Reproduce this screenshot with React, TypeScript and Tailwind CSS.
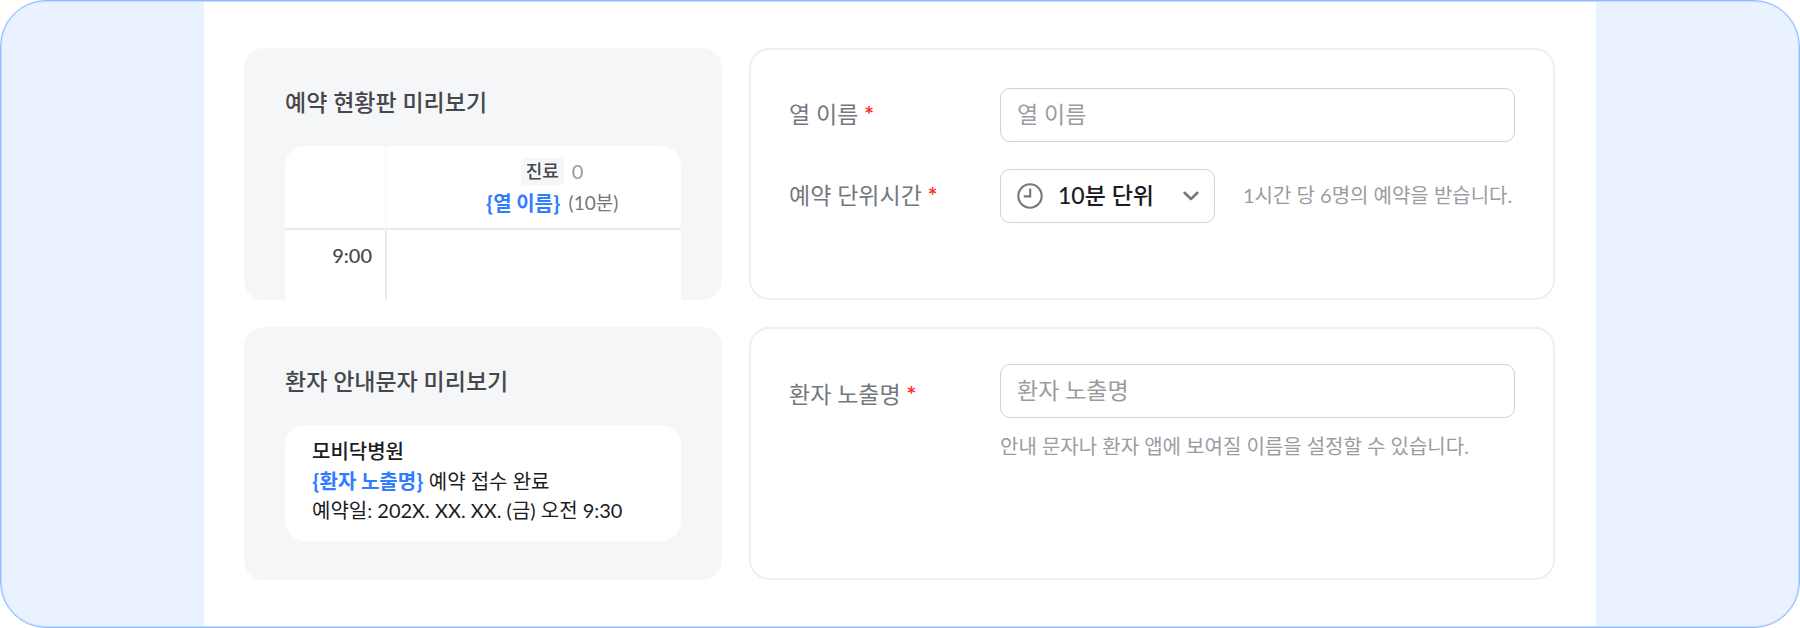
import type { ReactNode } from 'react'

function Clock() {
  return (
    <svg viewBox="0 0 26 26" fill="none" stroke="#74777e" strokeWidth="2.1" className="h-[26px] w-[26px]">
      <circle cx="13" cy="13" r="11.7" />
      <path d="M13.2 5.5v7.9H6.8" />
    </svg>
  )
}

function Chevron() {
  return (
    <svg viewBox="0 0 16 10" fill="none" stroke="#74777e" strokeWidth="2.6" strokeLinecap="round" strokeLinejoin="round" className="h-[10px] w-4">
      <path d="M1.6 1.8 8 8l6.4-6.2" />
    </svg>
  )
}

function PreviewCard({ title, children }: { title: string; children: ReactNode }) {
  return (
    <section className="flex flex-col overflow-hidden rounded-[20px] bg-[#f5f6f8] px-[41px] pt-9">
      <h2 className="text-[23px] leading-9 font-medium text-[#46474c]">{title}</h2>
      {children}
    </section>
  )
}

function Token({ children }: { children: ReactNode }) {
  return <strong className="font-['Noto_Sans_CJK_KR',sans-serif] text-[20px] font-bold text-[#327dff]">{children}</strong>
}

function FieldLabel({ htmlFor, children }: { htmlFor: string; children: ReactNode }) {
  return (
    <label htmlFor={htmlFor} className="w-[211px] shrink-0 text-[23px] leading-[52px] text-[#74777e]">
      {children} <span className="font-bold text-[#ff2b2b]">*</span>
    </label>
  )
}

const fieldClass =
  'h-[54px] w-full rounded-[10px] border border-[#cfd2d9] bg-white px-4 pb-0.5 text-[23px] text-[#1b1c1e] outline-none placeholder:text-[#9a9ca1]'

export default function App() {
  return (
    <main className="flex min-h-screen justify-center overflow-hidden rounded-[46px] border border-[#8ebcff] bg-[#eaf1ff] font-['Lato','Noto_Sans_CJK_KR',sans-serif] shadow-[inset_0_0_0_1px_#c5ddff]">
      <div className="grid w-full max-w-[1392px] grid-cols-[478fr_806fr] grid-rows-[252px_253px] gap-[27px] border-y border-[#c5ddff] bg-white pt-[46px] pr-[41px] pl-10">
        <PreviewCard title="예약 현황판 미리보기">
          <table className="mt-[26px] w-full flex-1 border-separate border-spacing-0 rounded-t-[20px] bg-white">
            <thead>
              <tr className="h-[84px]">
                <th className="w-[102px] border-r-2 border-b-2 border-r-[#fafafb] border-b-[#e9eaed]" />
                <th className="border-b-2 border-[#e9eaed] pt-1 font-normal">
                  <div className="flex items-center justify-center gap-2 pl-9 text-[18px]">
                    <span className="rounded-sm bg-[#f5f6f8] px-[5px] leading-[27px] font-medium text-[#46474c]">진료</span>
                    <span className="text-[20px] leading-[27px] text-[#9a9ca1]">0</span>
                  </div>
                  <div className="flex items-center justify-center gap-2 pl-9 text-[19px] leading-9 text-[#74777e]">
                    <Token>{'{열 이름}'}</Token>
                    <span>(10분)</span>
                  </div>
                </th>
              </tr>
            </thead>
            <tbody>
              <tr>
                <td className="border-r-2 border-[#e9eaed] pt-[11px] pr-[13px] text-right align-top text-[20px] leading-7 font-medium text-[#46474c]">9:00</td>
                <td />
              </tr>
            </tbody>
          </table>
        </PreviewCard>

        <section className="flex flex-col gap-[27px] rounded-[20px] border-2 border-[#eeeff1] px-[38px] pt-[38px]">
          <div className="flex">
            <FieldLabel htmlFor="column-name">열 이름</FieldLabel>
            <input id="column-name" type="text" placeholder="열 이름" className={fieldClass} />
          </div>
          <div className="flex">
            <FieldLabel htmlFor="unit-time">예약 단위시간</FieldLabel>
            <div className="relative w-[215px] shrink-0">
              <select id="unit-time" className={`${fieldClass} appearance-none pl-[57px] font-medium`} defaultValue="10">
                <option value="10">10분 단위</option>
              </select>
              <span className="pointer-events-none absolute inset-y-0 left-[17px] flex items-center">
                <Clock />
              </span>
              <span className="pointer-events-none absolute inset-y-0 right-4 flex items-center">
                <Chevron />
              </span>
            </div>
            <p className="ml-7 text-[20px] leading-[52px] whitespace-nowrap text-[#9a9ca1]">1시간 당 6명의 예약을 받습니다.</p>
          </div>
        </section>

        <PreviewCard title="환자 안내문자 미리보기">
          <div className="mt-[26px] rounded-[20px] bg-white px-[27px] pt-3 pb-4 text-[20px] leading-[29px] text-[#1b1c1e]">
            <p className="font-medium">모비닥병원</p>
            <p>
              <Token>{'{환자 노출명}'}</Token> 예약 접수 완료
            </p>
            <p>예약일: 202X. XX. XX. (금) 오전 9:30</p>
          </div>
        </PreviewCard>

        <section className="rounded-[20px] border-2 border-[#eeeff1] px-[38px] pt-[35px]">
          <div className="flex">
            <div className="flex pt-1">
              <FieldLabel htmlFor="display-name">환자 노출명</FieldLabel>
            </div>
            <div className="w-full">
              <input id="display-name" type="text" placeholder="환자 노출명" className={fieldClass} />
              <p className="mt-3 text-[20px] leading-8 text-[#9a9ca1]">안내 문자나 환자 앱에 보여질 이름을 설정할 수 있습니다.</p>
            </div>
          </div>
        </section>
      </div>
    </main>
  )
}
